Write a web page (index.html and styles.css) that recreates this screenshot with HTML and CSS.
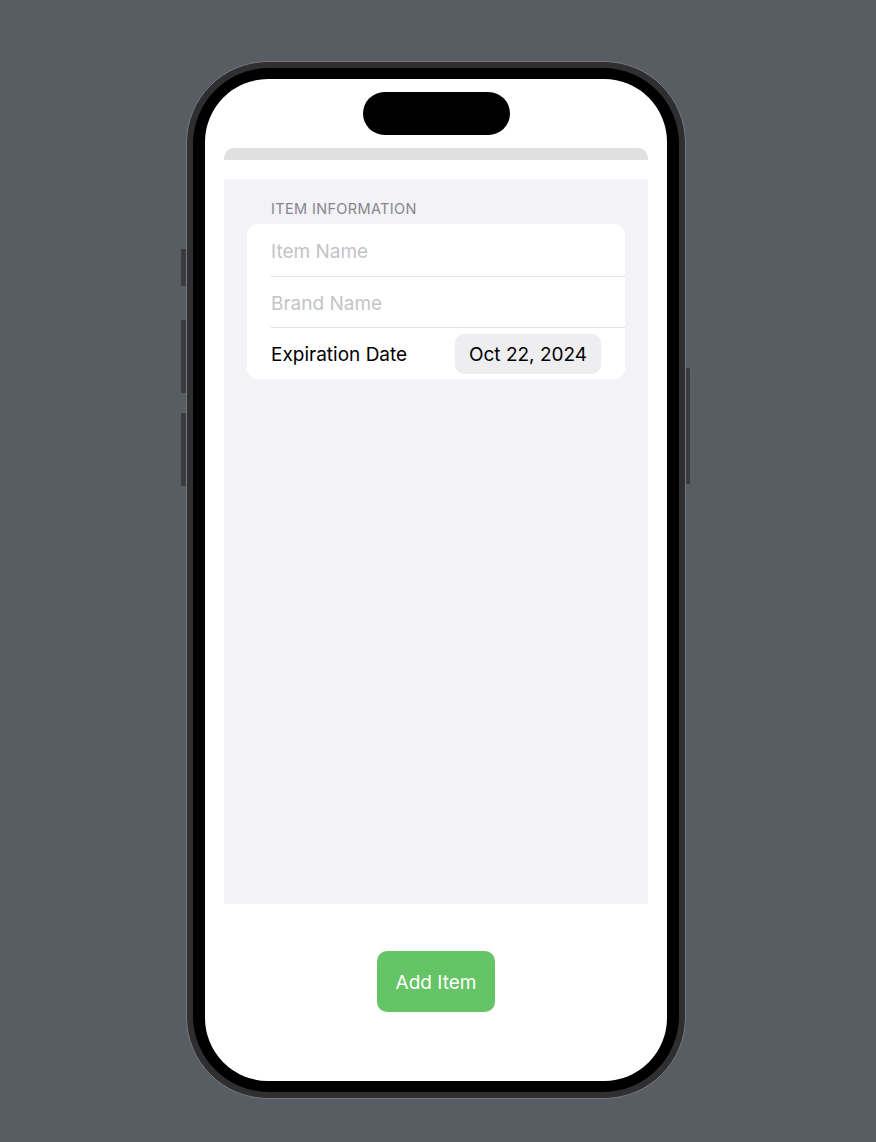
FILE: index.html
```html
<!DOCTYPE html>
<html>
<head>
<meta charset="utf-8">
<link rel="stylesheet" href="styles.css">
</head>
<body>
<div class="stage">
  <div class="phone">
    <span class="hw hw-action"></span>
    <span class="hw hw-vol-up"></span>
    <span class="hw hw-vol-down"></span>
    <span class="hw hw-power"></span>
    <div class="bezel">
      <div class="screen">
        <div class="island"></div>
        <div class="sheet-bar"></div>
        <div class="form">
          <div class="section-header">ITEM INFORMATION</div>
          <div class="card">
            <div class="row row-1"><div class="row-inner placeholder">Item Name</div></div>
            <div class="row row-2"><div class="row-inner placeholder">Brand Name</div></div>
            <div class="row row-3"><div class="row-inner last">
              <span class="label">Expiration Date</span>
              <span class="date-pill">Oct 22, 2024</span>
            </div></div>
          </div>
        </div>
        <div class="actions">
          <button class="add-btn">Add Item</button>
        </div>
      </div>
    </div>
  </div>
</div>
</body>
</html>
```

FILE: styles.css
```css
* { box-sizing: border-box; }
html, body {
  margin: 0;
  padding: 0;
  background: #585c63;
  font-family: Inter, "Liberation Sans", sans-serif;
}
.stage {
  width: 876px;
  height: 1142px;
  padding: 61px 0 0 186px;
}
.phone {
  position: relative;
  width: 500px;
  height: 1038px;
  border-radius: 82px;
  background: #2f2f31;
  border: 1px solid #77797d;
  padding: 6px;
}
.hw {
  position: absolute;
  width: 5px;
  background: #3a3b3e;
  border-radius: 1px;
}
.hw-action { left: -6px; top: 187px; height: 37px; }
.hw-vol-up { left: -6px; top: 258px; height: 73px; }
.hw-vol-down { left: -6px; top: 351px; height: 73px; }
.hw-power { right: -5px; top: 306px; height: 116px; width: 4px; }
.bezel {
  width: 100%;
  height: 100%;
  background: #000;
  border-radius: 76px;
  padding: 11px 12px 11px 12px;
}
.screen {
  width: 100%;
  height: 100%;
  background: #fff;
  border-radius: 63px;
  display: flex;
  flex-direction: column;
  padding: 13px 19px 0 19px;
  overflow: hidden;
}
.island {
  align-self: center;
  width: 147px;
  height: 43px;
  border-radius: 22px;
  background: #000;
  flex: none;
}
.sheet-bar {
  margin-top: 13px;
  height: 12px;
  background: #e0e0e0;
  border-radius: 10px 10px 0 0;
  flex: none;
}
.form {
  margin-top: 19px;
  height: 725px;
  background: #f2f2f7;
  padding: 21px 23px 0 23px;
  flex: none;
}
.section-header {
  font-size: 14.5px;
  line-height: 17px;
  color: #86868b;
  padding-left: 24px;
  margin-bottom: 7px;
  letter-spacing: 0.35px;
}
.card {
  background: #fff;
  border-radius: 11px;
  overflow: hidden;
}
.row {
  padding-left: 24px;
}
.row-inner {
  border-bottom: 1px solid #e2e2e4;
  display: flex;
  align-items: center;
  font-size: 19px;
  color: #000;
}
.row-1 .row-inner { height: 53px; padding-top: 3px; }
.row-2 .row-inner { height: 51px; padding-top: 2px; }
.row-3 .row-inner { height: 51px; padding-top: 1px; }
.row-inner.last {
  border-bottom: none;
  justify-content: space-between;
  padding-right: 24px;
}
.placeholder { color: #c4c4c7; }
.date-pill {
  background: #eeeef0;
  border-radius: 9px;
  height: 40px;
  width: 146px;
  display: flex;
  align-items: center;
  justify-content: center;
  font-size: 19px;
  padding-top: 1px;
}
.actions {
  display: flex;
  justify-content: center;
  padding-top: 47px;
}
.add-btn {
  width: 118px;
  height: 61px;
  border: none;
  border-radius: 10px;
  background: #65c466;
  color: #fff;
  font-family: Inter, "Liberation Sans", sans-serif;
  font-size: 19px;
  padding: 2px 0 0 0;
}
```
